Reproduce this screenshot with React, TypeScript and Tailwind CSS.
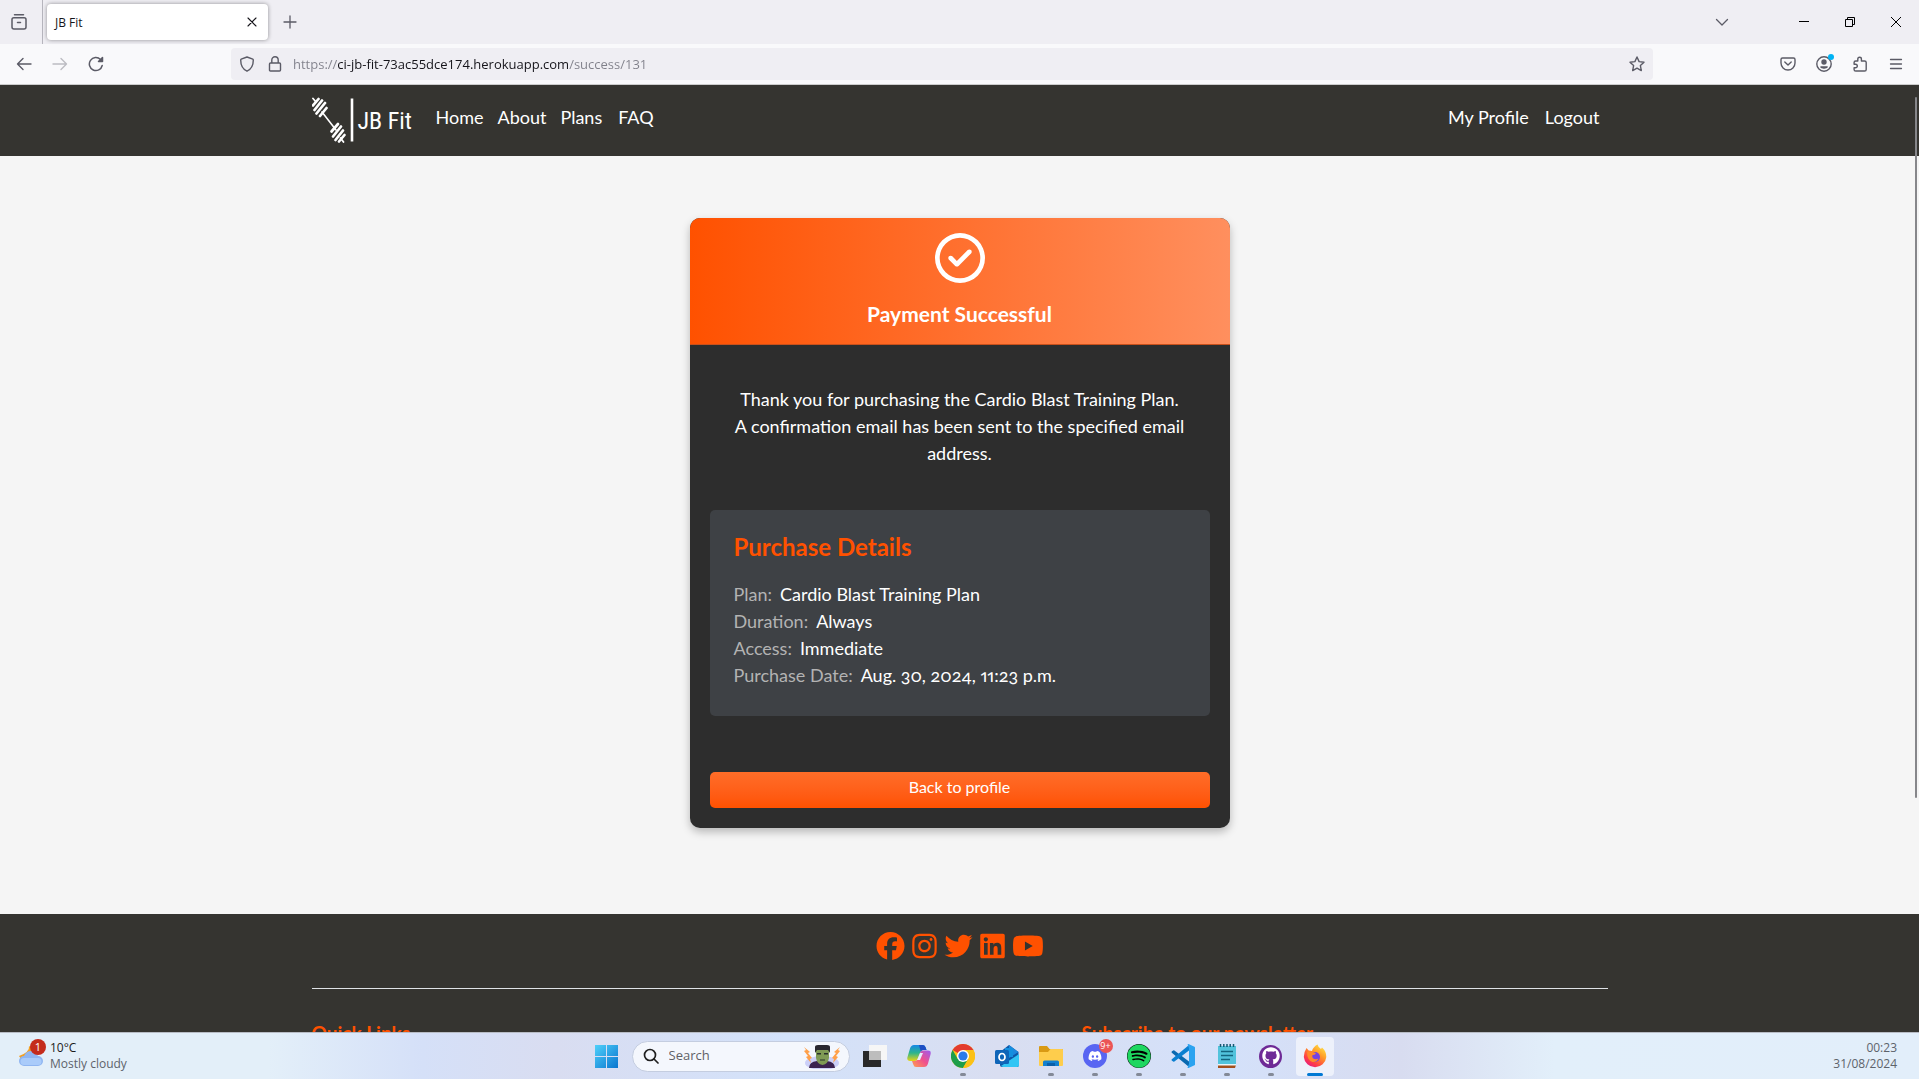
import type { ReactNode } from "react";
import {
  FaFacebook,
  FaInstagram,
  FaLinkedin,
  FaRegCircleCheck,
  FaTwitter,
  FaYoutube,
  FaDiscord,
  FaGithub,
  FaSpotify,
} from "react-icons/fa6";

const stroke = {
  fill: "none",
  stroke: "currentColor",
  strokeLinecap: "round" as const,
  strokeLinejoin: "round" as const,
};

function TabStrip() {
  return (
    <div className="flex h-11 items-center bg-[#efeef3] text-[#5b5b66]">
      <button aria-label="Firefox View" className="flex h-11 w-[43px] items-center justify-center border-r border-[#b6b5bd] pr-1">
        <svg viewBox="0 0 18 18" className="size-[18px]" {...stroke} strokeWidth="1.5">
          <path d="M4.5 1.8h9M2 6.5q0-1.8 1.8-1.8h10.4q1.8 0 1.8 1.8v7.5q0 2-2 2H4q-2 0-2-2zM7.5 9.5h3" />
        </svg>
      </button>
      <div className="ml-1 flex h-9 w-[221px] items-center justify-between rounded bg-white pr-2 pl-2 text-[#15141a] shadow-[0_0_4px_rgba(0,0,0,0.4)]">
        <span className="pt-0.5 text-xs">JB Fit</span>
        <button aria-label="Close tab" className="flex size-4 items-center justify-center">
          <svg viewBox="0 0 10 10" className="size-2.5" {...stroke} strokeWidth="1.1">
            <path d="M1 1l8 8M9 1l-8 8" />
          </svg>
        </button>
      </div>
      <button aria-label="New tab" className="ml-3 flex size-5 items-center justify-center">
        <svg viewBox="0 0 14 14" className="size-3.5" {...stroke} strokeWidth="1.3">
          <path d="M7 1v12M1 7h12" />
        </svg>
      </button>
      <div className="flex-1" />
      <button aria-label="List all tabs" className="mr-[49px] flex size-5 items-center justify-center">
        <svg viewBox="0 0 14 14" className="size-3.5" {...stroke} strokeWidth="1.3">
          <path d="M1.5 4.5L7 10l5.500-5.500" />
        </svg>
      </button>
      <div className="flex text-black">
        <button aria-label="Minimise" className="flex h-11 w-[46px] items-center justify-center">
          <svg viewBox="0 0 10 10" className="size-2.5" shapeRendering="crispEdges">
            <path d="M0 4h10v1H0z" />
          </svg>
        </button>
        <button aria-label="Restore" className="flex h-11 w-[46px] items-center justify-center">
          <svg viewBox="0 0 10 10" className="size-2.5" fill="none" stroke="currentColor">
            <path d="M.5 2.500h7v7h-7zM2.500 2.500v-2h7v7h-2" />
          </svg>
        </button>
        <button aria-label="Close window" className="flex h-11 w-[46px] items-center justify-center">
          <svg viewBox="0 0 10 10" className="size-2.5" fill="none" stroke="currentColor">
            <path d="M0 0l10 10M10 0L0 10" />
          </svg>
        </button>
      </div>
    </div>
  );
}

function Toolbar() {
  return (
    <div className="flex h-[41px] items-center border-b border-[#cccccc] bg-[#f9f9fb] text-[#5b5b66]">
      <div className="flex w-[231px] items-center gap-5 pl-4">
        <button aria-label="Back">
          <svg viewBox="0 0 16 16" className="size-4" {...stroke} strokeWidth="1.4">
            <path d="M15 8H1.500M7 2.500L1.500 8 7 13.500" />
          </svg>
        </button>
        <button aria-label="Forward" className="text-[#bcbcc2]">
          <svg viewBox="0 0 16 16" className="size-4" {...stroke} strokeWidth="1.4">
            <path d="M1 8h13.500M9 2.500L14.500 8 9 13.500" />
          </svg>
        </button>
        <button aria-label="Reload">
          <svg viewBox="0 0 16 16" className="size-4" {...stroke} strokeWidth="1.5">
            <path d="M14.200 9.500A6.500 6.500 0 1 1 12.500 3.500" />
            <path d="M14.500 1.500v4h-4z" fill="currentColor" />
          </svg>
        </button>
      </div>
      <div className="flex h-8 flex-1 items-center rounded bg-[#efeef3] pr-2 pl-2">
        <svg viewBox="0 0 16 16" className="size-4" {...stroke} strokeWidth="1.400">
          <path d="M8 1l5.800 2.200q.5.300.5.900c0 4.600-2 9.200-6.300 11.100C3.700 13.300 1.700 8.700 1.700 4.100q0-.6.500-.9z" />
        </svg>
        <svg viewBox="0 0 16 16" className="ml-3 size-4" {...stroke} strokeWidth="1.400">
          <path d="M3.500 7h9q1 0 1 1v6q0 1-1 1h-9q-1 0-1-1V8q0-1 1-1zM4.800 7V4a3.200 3.200 0 0 1 6.400 0v3" />
        </svg>
        <input
          aria-label="Address"
          readOnly
          value="https://ci-jb-fit-73ac55dce174.herokuapp.com/success/131"
          className="ml-2.5 min-w-0 flex-1 bg-[linear-gradient(to_right,#80808a_45px,#15141a_45px,#15141a_275px,#80808a_275px)] bg-clip-text pt-0.5 text-[13px] text-transparent outline-none"
        />
        <button aria-label="Bookmark this page">
          <svg viewBox="0 0 16 16" className="size-4" {...stroke} strokeWidth="1.400">
            <path d="M8 1l2.100 4.600 4.900.6-3.600 3.400.9 5L8 12.200l-4.300 2.400.9-5L1 6.200l4.900-.6z" />
          </svg>
        </button>
      </div>
      <div className="ml-[127px] flex items-center gap-5 pr-[15px]">
        <button aria-label="Save to Pocket">
          <svg viewBox="0 0 16 16" className="size-4" {...stroke} strokeWidth="1.400">
            <path d="M2.500 2h11q1.500 0 1.500 1.500V7A7 7 0 0 1 1 7V3.500Q1 2 2.500 2zM4.800 6L8 9l3.200-3" />
          </svg>
        </button>
        <button aria-label="Account" className="relative">
          <svg viewBox="0 0 16 16" className="size-4" {...stroke} strokeWidth="1.400">
            <circle cx="8" cy="8" r="7.200" />
            <circle cx="8" cy="6" r="2" fill="currentColor" />
            <path d="M4.800 11h6.400c-.8 1.500-5.600 1.500-6.400 0z" fill="currentColor" />
          </svg>
          <span className="absolute -top-0.5 -right-0.5 size-1.5 rounded-full bg-[#00b3f4]" />
        </button>
        <button aria-label="Extensions">
          <svg viewBox="0 0 16 16" className="size-4" {...stroke} strokeWidth="1.400">
            <path d="M5.800 5V3a1.800 1.800 0 0 1 3.600 0v2h3.200q1.600 0 1.600 1.600v6.800q0 1.600-1.600 1.600H3.700q-1.600 0-1.600-1.600v-1.600h1.400a1.800 1.800 0 0 0 0-3.600H2.100V6.600Q2.100 5 3.700 5z" />
          </svg>
        </button>
        <button aria-label="Menu">
          <svg viewBox="0 0 16 16" className="size-4" {...stroke} strokeWidth="1.300">
            <path d="M2.500 3.500h11M2.500 8h11M2.500 12.500h11" />
          </svg>
        </button>
      </div>
    </div>
  );
}

function Logo() {
  return (
    <a href="#" className="flex h-[47px] w-[100px] items-center text-white">
      <svg viewBox="0 0 44 47" className="h-[47px] w-[44px] shrink-0" fill="none" stroke="currentColor" strokeLinecap="round">
        <path d="M10 15L24 33" strokeWidth="1.600" />
        <path d="M1 1.500l3 3.500M28.500 41l3 4" strokeWidth="1.800" />
        <path d="M1 8.500L6.500 2M2.500 13L10 3.500M4.500 16.500L13 6M8 19L14.500 11" strokeWidth="2.700" />
        <path d="M19.500 34.500L26 27M21 39.500L29 29.500M23.500 43L31 33.500M27 44.500L32.500 38" strokeWidth="2.700" />
        <path d="M40 1.500v43" strokeWidth="2.600" strokeLinecap="butt" />
      </svg>
      <span className="pl-0.5 font-['Liberation_Sans_Narrow','Roboto_Condensed','Lato',sans-serif] text-[24px] leading-none whitespace-nowrap">
        JB Fit
      </span>
    </a>
  );
}

function SiteHeader() {
  return (
    <header className="bg-[#353430] text-white">
      <div className="mx-auto flex h-[71px] max-w-[1296px] items-center">
        <Logo />
        <nav className="flex flex-1 items-center pb-1.5 pl-4 text-[18px]">
          <a href="#" className="px-2">Home</a>
          <a href="#" className="pr-2 pl-1.5">About</a>
          <a href="#" className="pr-2 pl-1.5">Plans</a>
          <a href="#" className="px-2">FAQ</a>
          <span className="flex-1" />
          <a href="#" className="px-2">My Profile</a>
          <a href="#" className="px-2">Logout</a>
        </nav>
      </div>
    </header>
  );
}

const details = [
  ["Plan:", "Cardio Blast Training Plan"],
  ["Duration:", "Always"],
  ["Access:", "Immediate"],
  ["Purchase Date:", "Aug. 30, 2024, 11:23 p.m."],
];

function SuccessCard() {
  return (
    <section className="mx-auto w-[540px] max-w-full overflow-hidden rounded-[10px] bg-[#2d2d2d] text-white shadow-[0_4px_8px_rgba(0,0,0,0.25)]">
      <div className="flex flex-col items-center border-b border-[#c9501b] bg-[linear-gradient(to_right,#ff5100,#ff8f5e)] pt-[15px] pb-4">
        <FaRegCircleCheck className="size-[50px]" />
        <h1 className="mt-4 text-[21px] leading-[29px] font-bold">Payment Successful</h1>
      </div>
      <div className="p-5">
        <p className="mt-[21px] px-5 text-center text-[18px] leading-[27px]">
          Thank you for purchasing the Cardio Blast Training Plan.
          <br />A confirmation email has been sent to the specified email address.
        </p>
        <div className="mt-[43px] rounded-[5px] bg-[#3e4145] px-6 pt-[22px] pb-[27px]">
          <h2 className="text-[24px] leading-[30px] font-bold text-[#ff5100]">Purchase Details</h2>
          <dl className="mt-[19px] text-[18px] leading-[27px] oldstyle-nums proportional-nums">
            {details.map(([label, value]) => (
              <div key={label} className="flex gap-2">
                <dt className="text-[#b3b3b3]">{label}</dt>
                <dd>{value}</dd>
              </div>
            ))}
          </dl>
        </div>
        <button className="mt-14 block h-9 w-full rounded-[5px] bg-linear-to-b from-[#ff6d28] to-[#ff5100] pb-1.5 text-base">
          Back to profile
        </button>
      </div>
    </section>
  );
}

function SiteFooter() {
  return (
    <footer className="bg-[#353430] text-[#ff5100]">
      <div className="mx-auto max-w-[1296px] pt-[18px]">
        <div className="flex justify-center gap-[7px]">
          <a href="#" aria-label="Facebook"><FaFacebook className="h-7 w-[29px]" /></a>
          <a href="#" aria-label="Instagram"><FaInstagram className="h-7 w-[25px]" /></a>
          <a href="#" aria-label="Twitter"><FaTwitter className="h-7 w-[29px]" /></a>
          <a href="#" aria-label="LinkedIn"><FaLinkedin className="h-7 w-[25px]" /></a>
          <a href="#" aria-label="YouTube"><FaYoutube className="h-7 w-8" /></a>
        </div>
        <hr className="mt-7 border-[#dee2e6]" />
        <div className="grid grid-cols-12 gap-x-6 pt-8 text-[19px] leading-6 font-bold">
          <h2 className="col-span-7">Quick Links</h2>
          <h2 className="col-span-5">Subscribe to our newsletter</h2>
        </div>
      </div>
    </footer>
  );
}

function TaskIcon({ label, running, active, children }: { label: string; running?: boolean; active?: boolean; children: ReactNode }) {
  return (
    <button
      aria-label={label}
      className={
        active
          ? "relative mx-[3px] flex h-[39px] w-[38px] items-center justify-center rounded bg-[#edf1fb]"
          : "relative flex h-[39px] w-11 items-center justify-center"
      }
    >
      {children}
      {running && <span className="absolute bottom-0 h-[3px] w-1.5 rounded-full bg-[#838997]" />}
      {active && <span className="absolute bottom-0 h-[3px] w-4 rounded-full bg-[#0078d4]" />}
    </button>
  );
}

function Frankenstein() {
  return (
    <svg viewBox="0 0 38 25" className="h-[25px] w-[38px]">
      <ellipse cx="19" cy="19" rx="17" ry="7" fill="#b9bdf5" opacity=".7" />
      <path d="M1 3l6 5-2 1 4 5-2 1 1 4-5-6 2-1-4-5 2-1z" fill="#ffa04a" />
      <path d="M37 3l-6 5 2 1-4 5 2 1-1 4 5-6-2-1 4-5-2-1z" fill="#ffa04a" />
      <path d="M6 24q0-6 8-7h10q8 1 8 7z" fill="#3b2250" />
      <path d="M13 5h13v9q-1 6-6.500 7Q14 20 13 14z" fill="#7f9a55" />
      <path d="M12 9V3q0-2 3-2h9q3 0 3 2v6l-2-3H14z" fill="#29272f" />
      <path d="M14 9h4v1.500h-4zM21 9h4v1.500h-4zM17 15.500h5v1h-5z" fill="#29302a" />
    </svg>
  );
}

function Taskbar() {
  return (
    <div className="grid h-[47px] shrink-0 grid-cols-[1fr_auto_1fr] items-center border-t border-[#b8bcc5] bg-[linear-gradient(to_right,#e3eff9_0%,#e3eff9_14%,#d5e0f8_22%,#d9ddf1_29%,#d3e2fa_41%,#d9def1_52%,#d4e1fa_64%,#d8dcf0_73%,#e2effa_81%,#e2eefa_100%)]">
      <button aria-label="Weather" className="flex items-center gap-1.5 pl-[18px] text-left text-xs leading-4">
        <span className="relative flex">
          <svg viewBox="0 0 26 26" className="size-[26px]">
            <path d="M11 3q1 6-10 10 3 6 10 5 7-3 5-9-1-4-5-6z" fill="#f3a023" />
            <path d="M6 23a5 5 0 0 1 0-10q2-5 7-5t7 5a5 5 0 0 1 0 10z" fill="#8fb5f1" />
            <path d="M6 22a3.500 3.500 0 0 1 0-7h14a3.500 3.500 0 0 1 0 7z" fill="#a9cbfa" />
          </svg>
          <span className="absolute -top-1 -right-0.5 flex size-4 items-center justify-center rounded-full bg-[#c42b1c] text-[11px] text-white">1</span>
        </span>
        <span className="flex flex-col">
          <span className="text-[#1b1b1b]">10°C</span>
          <span className="text-[#5d636b]">Mostly cloudy</span>
        </span>
      </button>

      <div className="flex items-center pl-0.5">
        <TaskIcon label="Start">
          <svg viewBox="0 0 23 23" className="size-[23px]">
            <defs>
              <linearGradient id="start" x1="0" y1="0" x2="1" y2="1" gradientUnits="objectBoundingBox">
                <stop offset="0" stopColor="#4fd0fa" />
                <stop offset="1" stopColor="#0a75cf" />
              </linearGradient>
            </defs>
            <path d="M0 0h11v11H0zM12 0h11v11H12zM0 12h11v11H0zM12 12h11v11H12z" fill="url(#start)" />
          </svg>
        </TaskIcon>
        <label className="mx-[3px] flex h-[31px] w-[218px] items-center rounded-full border border-[#c4cde0] bg-[#f4f7fd] pr-2 pl-2.5">
          <svg viewBox="0 0 16 16" className="size-4 text-[#1f1f1f]" {...stroke} strokeWidth="1.700">
            <circle cx="7" cy="7" r="5.500" />
            <path d="M11 11l4 4" />
          </svg>
          <input
            aria-label="Search"
            placeholder="Search"
            className="ml-2.5 w-0 flex-1 bg-transparent text-[13px] outline-none placeholder:text-[#5f6167]"
          />
          <Frankenstein />
        </label>
        <TaskIcon label="Task view">
          <svg viewBox="0 0 24 24" className="size-6">
            <path d="M0 7h18v16H0z" fill="#292929" />
            <path d="M6 1h18v15H6z" fill="#f6f6f6" />
            <path d="M6 7h12v9H6z" fill="#bdbdbd" />
          </svg>
        </TaskIcon>
        <TaskIcon label="Copilot">
          <svg viewBox="0 0 24 24" className="size-6">
            <defs>
              <linearGradient id="copA" x1="0" y1="0" x2="0" y2="1">
                <stop offset="0" stopColor="#1688e8" />
                <stop offset=".5" stopColor="#2cb58c" />
                <stop offset="1" stopColor="#e9d414" />
              </linearGradient>
              <linearGradient id="copB" x1="1" y1="0" x2="0" y2="1">
                <stop offset="0" stopColor="#9b5bf0" />
                <stop offset=".5" stopColor="#f0508c" />
                <stop offset="1" stopColor="#ffa04f" />
              </linearGradient>
            </defs>
            <path d="M7 1h9q2 0 2.700 2.500L19.500 6H16q-2 0-2.800 2.500L11 15q-.8 2-3 2H3q-3.500 0-2.500-4L3 4.500Q4 1 7 1z" fill="url(#copA)" />
            <path d="M12 1h4q2 0 2.700 2.500L19.500 6H16q-1.500 0-2.300 1.500z" fill="#1c4fc4" />
            <path d="M17 23H9q-2 0-2.700-2.500L5 17h3q2 0 3-2l2.200-6.500Q14 6.500 16 6.500h5q3.500 0 2.500 4L21 19.500q-1 3.500-4 3.500z" fill="url(#copB)" />
            <path d="M13 9h3l-3 7h-3z" fill="#e6ecfc" />
          </svg>
        </TaskIcon>
        <TaskIcon label="Chrome" running>
          <svg viewBox="0 0 24 24" className="size-6">
            <circle cx="12" cy="12" r="12" fill="#fbc116" />
            <path d="M12 12L1.600 6A12 12 0 0 1 22.400 6H12z" fill="#e33b2e" />
            <path d="M1.600 6A12 12 0 0 0 12 24l5.200-9L12 12 6.800 15z" fill="#1e9e4a" />
            <path d="M12 6h10.400A12 12 0 0 1 12 24l5.200-9z" fill="#fbc116" />
            <circle cx="12" cy="12" r="6" fill="#fff" />
            <circle cx="12" cy="12" r="4.600" fill="#2b7bea" />
          </svg>
        </TaskIcon>
        <TaskIcon label="Outlook">
          <svg viewBox="0 0 24 24" className="size-6">
            <path d="M5 8l9-7 9.500 7v14q0 1-1 1H7q-2 0-2-2z" fill="#0c59a8" />
            <path d="M14 1l9.500 7-9.500 6z" fill="#1c88dd" />
            <path d="M6 22l18-12v11q0 2-2 2H8z" fill="#31c5f4" />
            <path d="M10 4h8v9h-8z" fill="#1490df" />
            <rect y="6" width="14" height="14" rx="1.500" fill="#0f65b8" />
            <ellipse cx="7" cy="13" rx="3" ry="3.500" fill="none" stroke="#fff" strokeWidth="1.700" />
          </svg>
        </TaskIcon>
        <TaskIcon label="File Explorer" running>
          <svg viewBox="0 0 24 24" className="size-6">
            <path d="M0 3q0-1 1-1h7l2.500 3H23q1 0 1 1v6H0z" fill="#d99a14" />
            <path d="M0 8h9l2.500-3H23q1 0 1 1v15q0 1-1 1H1q-1 0-1-1z" fill="#fecd4c" />
            <path d="M4 22v-4q0-1.500 1.500-1.500h13Q20 16.500 20 18v4z" fill="#1380cf" />
            <path d="M8 19h8v3H8z" fill="#0b5fa8" />
          </svg>
        </TaskIcon>
        <TaskIcon label="Discord" running>
          <span className="flex size-6 items-center justify-center rounded-full bg-[#5865f2] text-white">
            <FaDiscord className="size-3.5" />
          </span>
          <span className="absolute top-0.5 right-1 flex size-3.5 items-center justify-center rounded-full bg-[#eb5555] text-[9px] leading-none text-white">9+</span>
        </TaskIcon>
        <TaskIcon label="Spotify" running>
          <span className="flex size-6 items-center justify-center rounded-full bg-black text-[#1ed760]">
            <FaSpotify className="size-6" />
          </span>
        </TaskIcon>
        <TaskIcon label="Visual Studio Code" running>
          <svg viewBox="0 0 24 24" className="size-6">
            <path d="M1 7.300l1.200-.9q.6-.4 1.200 0L18 17.500V23L.8 8.700q-.8-.8.2-1.400z" fill="#0a69b0" />
            <path d="M1 16.700l1.200.9q.6.400 1.200 0L18 6.500V1L.8 15.300q-.8.800.2 1.400z" fill="#0b7fd0" />
            <path d="M17.500 0l6 2.700q.5.300.5.900v16.800q0 .6-.5.900l-6 2.700q-.9 0-1-.6L18 20V4l-1.500-3.400q.1-.6 1-.6z" fill="#2ba3f0" />
          </svg>
        </TaskIcon>
        <TaskIcon label="Notepad" running>
          <svg viewBox="0 0 20 24" className="h-6 w-5">
            <path d="M1 2h18v19H1z" fill="#52c3dc" />
            <path d="M1 21h18l-1 3H1z" fill="#a4501c" />
            <path d="M1 20h18v1.500H1z" fill="#e8f6fa" />
            <path d="M3.500 0v3M6.800 0v3M10 0v3M13.200 0v3M16.500 0v3" stroke="#155a72" strokeWidth="1.500" />
            <path d="M4 7.500h12M4 11.500h12M4 15.500h9" stroke="#14657f" strokeWidth="1.500" />
          </svg>
        </TaskIcon>
        <TaskIcon label="GitHub Desktop" running>
          <span className="flex size-[23px] items-center justify-center rounded-full bg-[#6e2a96] text-white">
            <FaGithub className="size-[18px]" />
          </span>
        </TaskIcon>
        <TaskIcon label="Firefox" active>
          <svg viewBox="0 0 24 24" className="size-6">
            <defs>
              <linearGradient id="fox" x1=".9" y1="0" x2=".2" y2="1">
                <stop offset="0" stopColor="#fff04a" />
                <stop offset=".4" stopColor="#ff9a28" />
                <stop offset=".75" stopColor="#ff3f46" />
                <stop offset="1" stopColor="#e31587" />
              </linearGradient>
            </defs>
            <path d="M3.500 4l2.200 2.500L9 7q1-4 5.500-6.500Q15 3 18 5l1-1.500q4.500 4 4.300 9.500A11.300 11.300 0 0 1 .8 13Q.8 8 3.500 4z" fill="url(#fox)" />
            <circle cx="12" cy="13" r="5" fill="#7543e3" />
            <path d="M4 8q3-2 5.500 0 2 0 3.500 1.500-1.500 1.500-3.500 1.500-1 3 2 4 2 .5 4-.5-2 4-6 3.500Q4 16 4 8z" fill="#ff8a2a" />
          </svg>
        </TaskIcon>
      </div>

      <button aria-label="Clock" className="flex flex-col items-end pr-[22px] text-[12px] leading-4 text-[#5d636b]">
        <span>00:23</span>
        <span>31/08/2024</span>
      </button>
    </div>
  );
}

export default function App() {
  return (
    <div className="flex h-screen flex-col overflow-hidden font-['Open_Sans','Noto_Sans',sans-serif]">
      <div className="shrink-0">
        <TabStrip />
        <Toolbar />
      </div>
      <div className="relative min-h-0 flex-1 overflow-hidden bg-[#f5f5f5] font-['Lato','Open_Sans',sans-serif]">
        <SiteHeader />
        <main className="pt-[62px] pb-[86px]">
          <SuccessCard />
        </main>
        <SiteFooter />
        <div className="absolute top-3 right-0.5 h-[74%] w-0.5 rounded bg-[#86868a]" />
      </div>
      <Taskbar />
    </div>
  );
}
